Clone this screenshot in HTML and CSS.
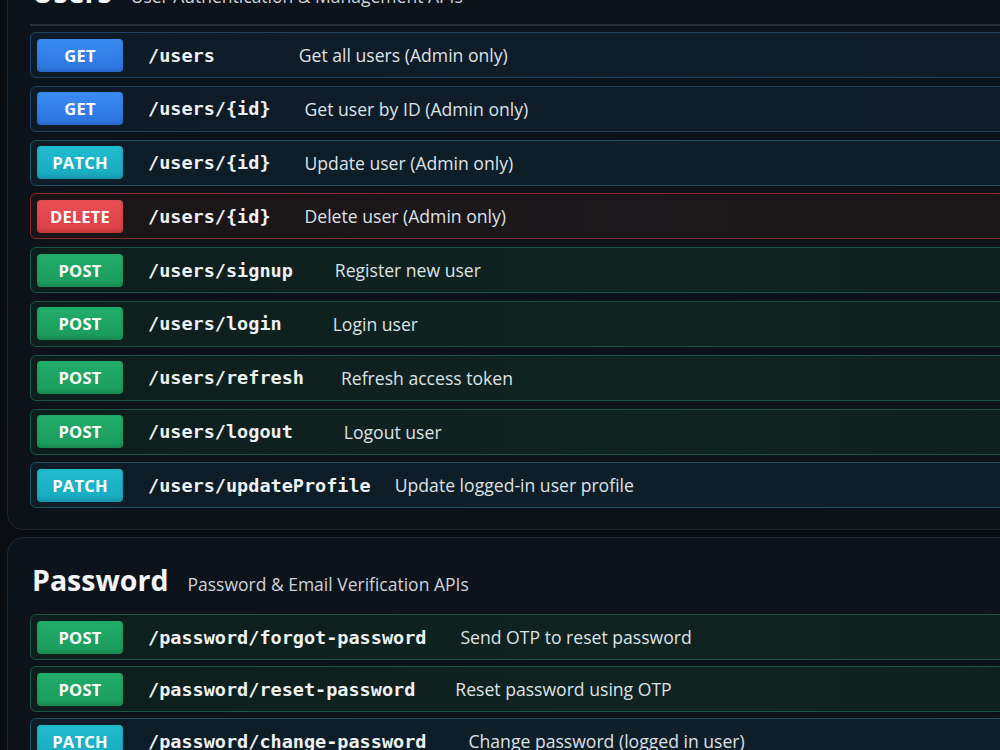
FILE: index.html
```html
<!DOCTYPE html>
<html lang="en">
<head>
<meta charset="utf-8">
<title>API Docs</title>
<link rel="stylesheet" href="styles.css">
</head>
<body>
<main class="page">
  <section class="card card--first">
    <header class="card-head card-head--ruled">
      <h2 class="card-title">Users</h2>
      <p class="card-sub">User Authentication &amp; Management APIs</p>
    </header>
    <div class="rows">
      <div class="row row--get"><span class="badge badge--get">GET</span><code class="path">/users</code><span class="desc g84">Get all users (Admin only)</span></div>
      <div class="row row--get"><span class="badge badge--get">GET</span><code class="path">/users/{id}</code><span class="desc">Get user by ID (Admin only)</span></div>
      <div class="row row--patch"><span class="badge badge--patch">PATCH</span><code class="path">/users/{id}</code><span class="desc">Update user (Admin only)</span></div>
      <div class="row row--delete"><span class="badge badge--delete">DELETE</span><code class="path">/users/{id}</code><span class="desc">Delete user (Admin only)</span></div>
      <div class="row row--post"><span class="badge badge--post">POST</span><code class="path">/users/signup</code><span class="desc g42">Register new user</span></div>
      <div class="row row--post"><span class="badge badge--post">POST</span><code class="path">/users/login</code><span class="desc g51">Login user</span></div>
      <div class="row row--post"><span class="badge badge--post">POST</span><code class="path">/users/refresh</code><span class="desc g37">Refresh access token</span></div>
      <div class="row row--post"><span class="badge badge--post">POST</span><code class="path">/users/logout</code><span class="desc g51">Logout user</span></div>
      <div class="row row--patch"><span class="badge badge--patch">PATCH</span><code class="path">/users/updateProfile</code><span class="desc g24">Update logged-in user profile</span></div>
    </div>
  </section>

  <section class="card">
    <header class="card-head">
      <h2 class="card-title">Password</h2>
      <p class="card-sub">Password &amp; Email Verification APIs</p>
    </header>
    <div class="rows rows--tight">
      <div class="row row--post"><span class="badge badge--post">POST</span><code class="path">/password/forgot-password</code><span class="desc">Send OTP to reset password</span></div>
      <div class="row row--post"><span class="badge badge--post">POST</span><code class="path">/password/reset-password</code><span class="desc g40">Reset password using OTP</span></div>
      <div class="row row--patch"><span class="badge badge--patch">PATCH</span><code class="path">/password/change-password</code><span class="desc g42">Change password (logged in user)</span></div>
    </div>
  </section>
</main>
</body>
</html>
```

FILE: styles.css
```css
* { box-sizing: border-box; }

html, body {
  margin: 0;
  padding: 0;
  background: #0a0d12;
  overflow: hidden;
  height: 100%;
}

body {
  font-family: "Open Sans", "Noto Sans", sans-serif;
  color: #e6ebf0;
}

.page {
  width: 1060px;
  padding-left: 7px;
  display: flex;
  flex-direction: column;
  gap: 7px;
}

.card {
  background: linear-gradient(180deg, #0d131a 0%, #0c1218 100%);
  border: 1px solid #1d2730;
  border-radius: 16px;
  padding: 25px 0 21px 22px;
}

.card--first {
  margin-top: -51px;
}

.card-head {
  display: flex;
  align-items: baseline;
  gap: 19px;
  padding-left: 2px;
  margin-bottom: 17px;
}

.card-head--ruled {
  border-bottom: 2px solid #283038;
  padding-bottom: 15px;
  margin-bottom: 6px;
}

.card-title {
  margin: 0;
  font-size: 28.5px;
  line-height: 34px;
  font-weight: 700;
  color: #f4f6f8;
}

.card-sub {
  margin: 0;
  font-size: 17.5px;
  color: #cdd3da;
}

.rows {
  display: flex;
  flex-direction: column;
  gap: 7.8px;
}

.rows--tight { gap: 6px; }

.row {
  display: flex;
  align-items: center;
  height: 46px;
  padding-left: 6px;
  border: 1px solid;
  border-radius: 6px;
}

.row--get {
  background: linear-gradient(90deg, #0e1b27 0%, #0f1d2a 60%, #0f1c28 100%);
  border-color: #1f4466;
}

.row--patch {
  background: linear-gradient(90deg, #0d1c26 0%, #0e1f2a 60%, #0d1d27 100%);
  border-color: #1b5562;
}

.row--delete {
  background: linear-gradient(90deg, #1a1517 0%, #1c171a 60%, #1b1719 100%);
  border-color: #872a2e;
}

.row--post {
  background: linear-gradient(90deg, #0d1f1d 0%, #0f2320 60%, #0e211f 100%);
  border-color: #1a5644;
}

.badge {
  flex: 0 0 auto;
  width: 86px;
  height: 33px;
  border-radius: 4px;
  display: flex;
  align-items: center;
  justify-content: center;
  font-family: "Open Sans", "Noto Sans", sans-serif;
  font-size: 16.5px;
  font-weight: 700;
  color: #ffffff;
  letter-spacing: 0.2px;
  box-shadow: inset 0 -2px 4px rgba(0,0,0,0.15);
}

.badge--get { background: linear-gradient(180deg, #3a8cf2 0%, #2d74de 100%); }
.badge--patch { background: linear-gradient(180deg, #22bccf 0%, #18a8bf 100%); }
.badge--delete { background: linear-gradient(180deg, #ea5055 0%, #d93f45 100%); }
.badge--post { background: linear-gradient(180deg, #22ad6a 0%, #1b9a5c 100%); }

.path {
  margin-left: 25px;
  font-family: "DejaVu Sans Mono", "Liberation Mono", monospace;
  font-weight: 700;
  font-size: 18.5px;
  color: #eef2f5;
  white-space: nowrap;
}

.desc {
  margin-left: 34px;
  font-size: 17.6px;
  color: #dde2e7;
  white-space: nowrap;
}

.desc.g84 { margin-left: 84px; }
.desc.g42 { margin-left: 42px; }
.desc.g51 { margin-left: 51px; }
.desc.g40 { margin-left: 40px; }
.desc.g37 { margin-left: 37px; }
.desc.g24 { margin-left: 24px; }
```
